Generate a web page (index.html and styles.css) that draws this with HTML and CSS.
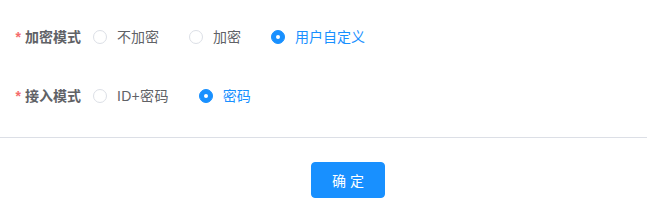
FILE: index.html
```html
<!DOCTYPE html>
<html lang="zh-CN">
<head>
    <meta charset="utf-8">
    <title>模式设置</title>
    <link rel="stylesheet" href="styles.css">
</head>
<body>
    <form class="mode-form">
        <div class="form-item">
            <label class="form-label required">加密模式</label>
            <div class="radio-group">
                <label class="radio"><span class="radio-inner"></span><span class="radio-text">不加密</span></label>
                <label class="radio"><span class="radio-inner"></span><span class="radio-text">加密</span></label>
                <label class="radio checked"><span class="radio-inner"></span><span class="radio-text">用户自定义</span></label>
            </div>
        </div>
        <div class="form-item">
            <label class="form-label required">接入模式</label>
            <div class="radio-group">
                <label class="radio"><span class="radio-inner"></span><span class="radio-text wide">ID+密码</span></label>
                <label class="radio checked"><span class="radio-inner"></span><span class="radio-text">密码</span></label>
            </div>
        </div>
    </form>

    <div class="footer">
        <button type="button" class="btn-primary">确 定</button>
    </div>
</body>
</html>
```

FILE: styles.css
```css
body {
    margin: 0;
    font-family: "Liberation Sans", "Noto Sans CJK SC", sans-serif;
    font-size: 14px;
    color: #606266;
    background: #fff;
}
.mode-form {
    padding: 19px 0 0 0;
}
.form-item {
    display: flex;
    align-items: center;
    height: 36px;
    line-height: 36px;
    margin-bottom: 23px;
}
.form-item:last-child {
    margin-bottom: 0;
}
.form-label {
    width: 93px;
    box-sizing: border-box;
    padding-right: 12px;
    text-align: right;
    font-weight: bold;
    color: #606266;
}
.form-label.required:before {
    content: "*";
    color: #f56c6c;
    margin-right: 4px;
}
.radio-group {
    display: flex;
    align-items: center;
}
.radio {
    display: flex;
    align-items: center;
    margin-right: 30px;
    cursor: pointer;
}
.radio-inner {
    width: 14px;
    height: 14px;
    box-sizing: border-box;
    border: 1px solid #dcdfe6;
    border-radius: 50%;
    background: #fff;
    position: relative;
}
.radio-text {
    padding-left: 10px;
}
.radio-text.wide {
    letter-spacing: 0.3px;
}
.radio.checked .radio-inner {
    background: #1890ff;
    border-color: #1890ff;
}
.radio.checked .radio-inner:after {
    content: "";
    position: absolute;
    left: 50%;
    top: 50%;
    width: 4px;
    height: 4px;
    margin: -2px 0 0 -2px;
    border-radius: 50%;
    background: #fff;
}
.radio.checked .radio-text {
    color: #1890ff;
}
.footer {
    margin-top: 23px;
    border-top: 1px solid #dcdfe6;
    padding: 24px 0 0 49px;
    display: flex;
    justify-content: center;
}
.btn-primary {
    height: 36px;
    padding: 0 20px;
    font-family: "Liberation Sans", "Noto Sans CJK SC", sans-serif;
    font-size: 14px;
    color: #fff;
    background: #1890ff;
    border: 1px solid #1890ff;
    border-radius: 4px;
    cursor: pointer;
}
```
